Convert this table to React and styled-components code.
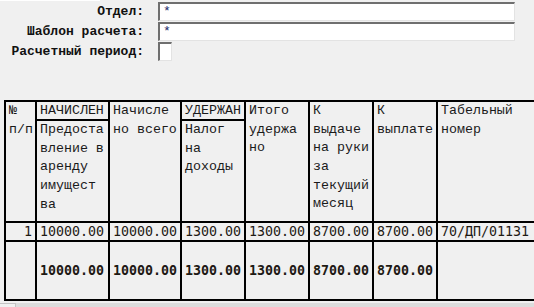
import styled, { createGlobalStyle } from "styled-components"

const mono = `"Liberation Mono", "Courier New", monospace`

const Global = createGlobalStyle`
    html, body {
        margin: 0;
        background: #f0f0f0;
    }
    body {
        width: 534px;
        height: 307px;
        overflow: hidden;
    }
`

const Page = styled.div`
    width: 534px;
    height: 307px;
    overflow: hidden;
    display: flex;
    flex-direction: column;
`

const TopEdge = styled.div`
    width: 100px;
    height: 1px;
    background: #fff;
`

const Form = styled.div`
    display: grid;
    grid-template-columns: 144px 357px;
    grid-auto-rows: 20px;
    column-gap: 14px;
    padding-top: 1px;
`

const Label = styled.label`
    font-family: ${mono};
    font-weight: bold;
    font-size: 13px;
    color: #111;
    text-align: right;
    line-height: 20px;
    white-space: pre;
`

const Field = styled.div`
    box-sizing: border-box;
    height: 19px;
    width: ${p => p.$small ? "14px" : "100%"};
    background: #fff;
    border-style: solid;
    border-width: 2px 1px 1px 2px;
    border-color: #6f6f6f #e3e3e3 #e3e3e3 #6f6f6f;
    padding-left: 3px;
    font-family: ${mono};
    font-size: 13px;
    line-height: 16px;
    color: #1c2a6b;
`

const Table = styled.div`
    display: grid;
    grid-template-columns: 31px 73px 72px 64px 64px 64px 64px 120px;
    grid-template-rows: 19px 102px 19px 59px;
    width: max-content;
    border-left: 2px solid #000;
    border-top: 2px solid #000;
    margin: 38px 0 0 4px;
`

const Cell = styled.div`
    box-sizing: border-box;
    border-right: 2px solid #000;
    border-bottom: 2px solid #000;
    padding: 0 3px;
    overflow: hidden;
    white-space: pre;
    grid-row: ${p => p.$rows ? `span ${p.$rows}` : "auto"};
`

const Head = styled(Cell)`
    font-family: ${mono};
    font-size: 13.3px;
    line-height: 18.7px;
    color: #1a1a1a;
`

const Num = styled(Cell)`
    font-family: "DejaVu Sans Mono", monospace;
    font-size: 13.3px;
    font-weight: ${p => p.$bold ? "bold" : "normal"};
    color: #1e1a14;
    display: flex;
    align-items: center;
    justify-content: ${p => p.$right ? "flex-end" : "flex-start"};
`

const Scroll = styled.div`
    display: flex;
    height: 5px;
    margin-top: 2px;
`

const ScrollCorner = styled.div`
    width: 15px;
    border-top: 1px solid #c4c4c4;
`

const ScrollTrack = styled.div`
    flex: 1;
    background: #dcdcdc;
    border-left: 1px solid #c4c4c4;
`

const header = [
    { text: "№\nп/п", rows: 2 },
    { text: "НАЧИСЛЕН" },
    { text: "Начисле\nно всего", rows: 2 },
    { text: "УДЕРЖАН" },
    { text: "Итого\nудержа\nно", rows: 2 },
    { text: "К\nвыдаче\nна руки\nза\nтекущий\nмесяц", rows: 2 },
    { text: "К\nвыплате", rows: 2 },
    { text: "Табельный\nномер", rows: 2 },
    { text: "Предоста\nвление в\nаренду\nимущест\nва" },
    { text: "Налог\nна\nдоходы" },
]

const row = ["1", "10000.00", "10000.00", "1300.00", "1300.00", "8700.00", "8700.00", "70/ДП/01131"]
const total = ["", "10000.00", "10000.00", "1300.00", "1300.00", "8700.00", "8700.00", ""]

export default function App() {
    return (
        <Page>
            <Global />
            <TopEdge />
            <Form>
                <Label>Отдел:</Label>
                <Field>*</Field>
                <Label>Шаблон расчета:</Label>
                <Field>*</Field>
                <Label>Расчетный период:</Label>
                <Field $small />
            </Form>

            <Table>
                {header.map((h, i) => (
                    <Head key={"h" + i} $rows={h.rows}>{h.text}</Head>
                ))}
                {row.map((v, i) => (
                    <Num key={"r" + i} $right={i === 0}>{v}</Num>
                ))}
                {total.map((v, i) => (
                    <Num key={"t" + i} $bold>{v}</Num>
                ))}
            </Table>

            <Scroll>
                <ScrollCorner />
                <ScrollTrack />
            </Scroll>
        </Page>
    )
}
